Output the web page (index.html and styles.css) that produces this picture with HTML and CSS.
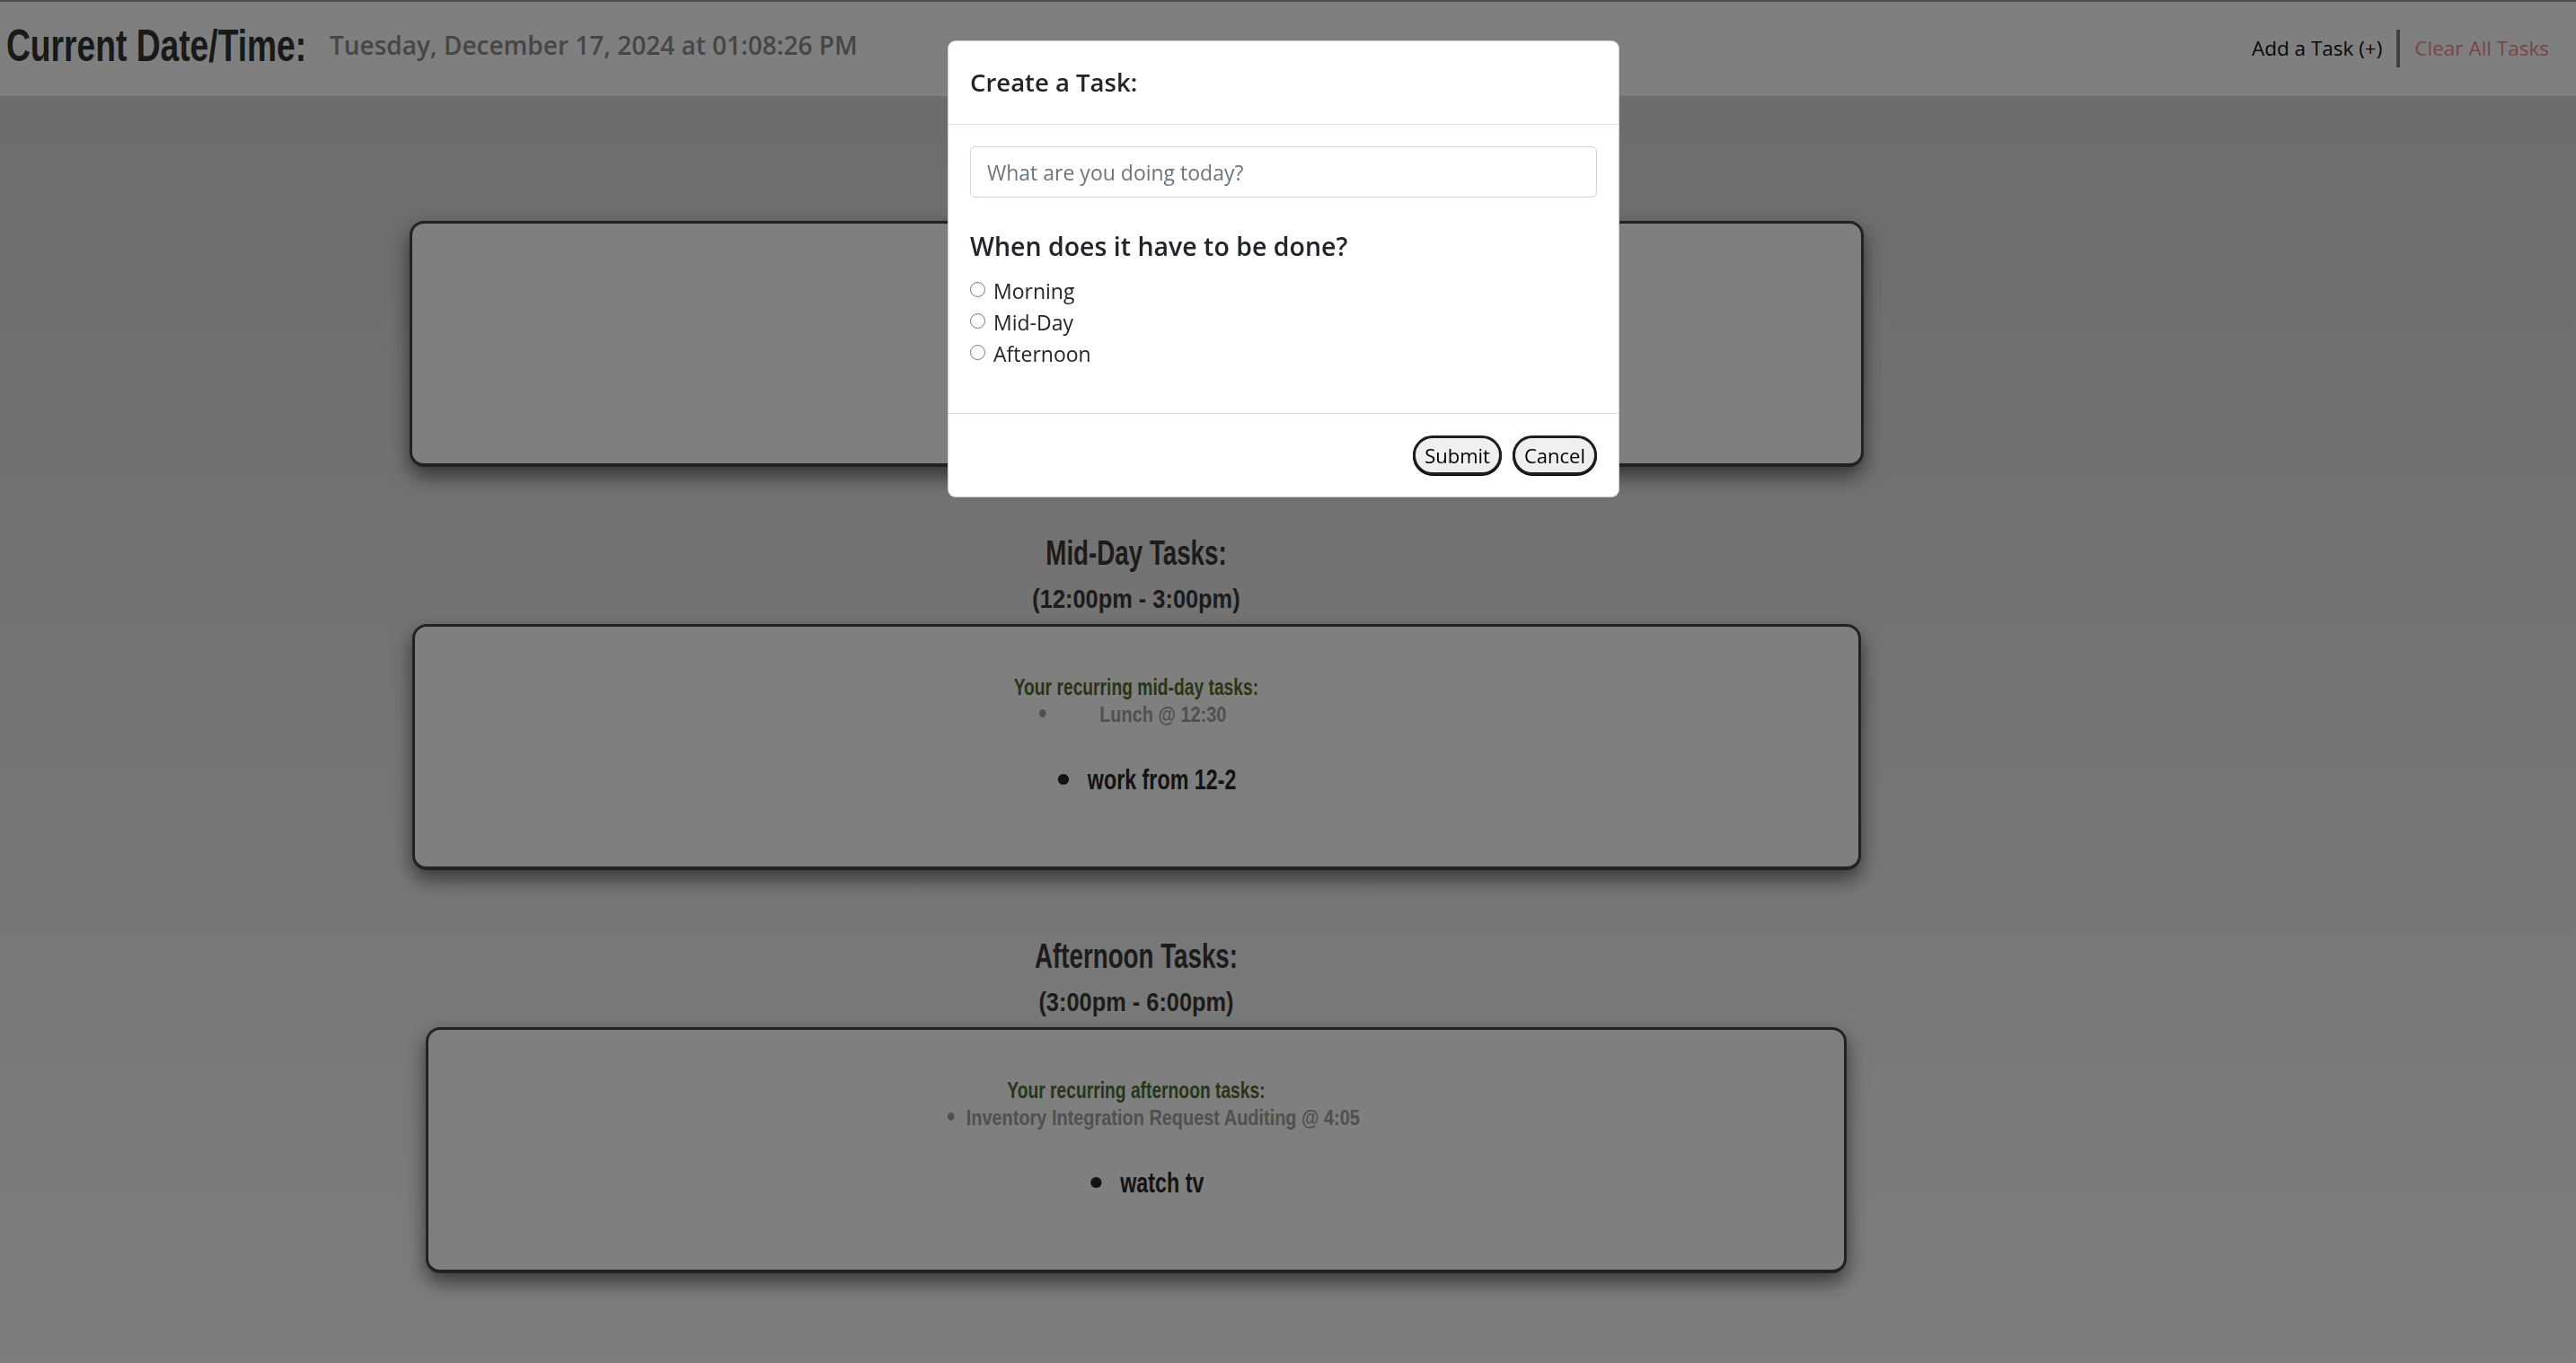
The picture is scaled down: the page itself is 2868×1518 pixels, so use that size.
FILE: index.html
```html
<!DOCTYPE html>
<html lang="en">
<head>
<meta charset="utf-8">
<title>Daily Planner</title>
<link rel="stylesheet" href="styles.css">
</head>
<body>
<header class="topbar">
  <div class="clock">
    <h1 class="clock-label">Current Date/Time:</h1>
    <span class="clock-value">Tuesday, December 17, 2024 at 01:08:26 PM</span>
  </div>
  <nav class="actions">
    <a class="action action-add">Add a Task (+)</a>
    <span class="action-divider"></span>
    <a class="action action-clear">Clear All Tasks</a>
  </nav>
</header>

<main class="planner">
  <section class="period">
    <h2 class="period-title">Morning Tasks:</h2>
    <h3 class="period-hours">(9:00am - 12:00pm)</h3>
    <div class="card card-morning"></div>
  </section>

  <section class="period">
    <h2 class="period-title">Mid-Day Tasks:</h2>
    <h3 class="period-hours">(12:00pm - 3:00pm)</h3>
    <div class="card card-midday">
      <div class="recurring">
        <p class="recurring-title">Your recurring mid-day tasks:</p>
        <ul class="recurring-list"><li>Lunch @ 12:30</li></ul>
      </div>
      <ul class="task-list"><li>work from 12-2</li></ul>
    </div>
  </section>

  <section class="period">
    <h2 class="period-title">Afternoon Tasks:</h2>
    <h3 class="period-hours">(3:00pm - 6:00pm)</h3>
    <div class="card card-afternoon">
      <div class="recurring">
        <p class="recurring-title">Your recurring afternoon tasks:</p>
        <ul class="recurring-list"><li>Inventory Integration Request Auditing @ 4:05</li></ul>
      </div>
      <ul class="task-list"><li>watch tv</li></ul>
    </div>
  </section>
</main>

<div class="backdrop"></div>

<div class="modal-wrap">
  <div class="modal">
    <div class="modal-header">
      <h5 class="modal-title">Create a Task:</h5>
    </div>
    <div class="modal-body">
      <input class="task-input" type="text" placeholder="What are you doing today?">
      <h4 class="when-title">When does it have to be done?</h4>
      <div class="choices">
        <label class="choice"><input class="choice-radio" type="radio" name="when"><span>Morning</span></label>
        <label class="choice"><input class="choice-radio" type="radio" name="when"><span>Mid-Day</span></label>
        <label class="choice"><input class="choice-radio" type="radio" name="when"><span>Afternoon</span></label>
      </div>
    </div>
    <div class="modal-footer">
      <button class="btn" type="button">Submit</button>
      <button class="btn" type="button">Cancel</button>
    </div>
  </div>
</div>
</body>
</html>
```

FILE: styles.css
```css
* {
  box-sizing: border-box;
}

html,
body {
  margin: 0;
  padding: 0;
}

body {
  min-height: 1518px;
  background: linear-gradient(to bottom, #dcd8da 0px, #dcd8da 110px, #fcfcfc 1518px);
  font-family: "Open Sans", "Noto Sans", sans-serif;
  color: #212529;
}

/* Condensed display face (Oswald-like) built from Liberation Sans Bold */
.clock-label,
.period-title,
.period-hours,
.card {
  font-family: "Liberation Sans", Arial, sans-serif;
  font-weight: 700;
}

/* ---------- top bar ---------- */
.topbar {
  height: 107px;
  border-top: 2px solid #9a9aa2;
  background: #ffffff;
  display: flex;
  align-items: flex-start;
  justify-content: space-between;
  padding: 0 30px 0 7px;
}

.clock {
  display: flex;
  align-items: flex-start;
  gap: 25px;
}

.clock-label {
  width: 335px;
  margin: 21px 0 0;
  font-size: 50px;
  line-height: 56px;
  white-space: nowrap;
  color: #333333;
  transform: scaleX(0.744);
  transform-origin: left center;
}

.clock-value {
  margin-top: 28px;
  font-size: 28px;
  line-height: 40px;
  font-weight: 600;
  color: #8c8c8c;
}

.actions {
  display: flex;
  align-items: center;
  height: 42px;
  margin-top: 31px;
}

.action {
  font-size: 22.5px;
  line-height: 32px;
  cursor: pointer;
}

.action-add {
  color: #111111;
}

.action-clear {
  color: #f08c8c;
}

.action-divider {
  width: 4px;
  height: 42px;
  margin: 0 16px;
  background: #808080;
}

/* ---------- planner ---------- */
.planner {
  width: 2530px;
  padding-top: 36px;
  text-align: center;
}

.period + .period {
  margin-top: 72px;
}

.period-title,
.period-hours {
  margin: 0;
  color: #383838;
  white-space: nowrap;
}

.period-title {
  font-size: 38px;
  line-height: 48px;
  transform: scaleX(0.73);
}

.period-hours {
  font-size: 29px;
  line-height: 54px;
  transform: scaleX(0.875);
}

.card {
  height: 274px;
  margin: 1px auto 0;
  padding-top: 53px;
  background: #ffffff;
  border: 3px solid #444444;
  border-bottom-width: 4px;
  border-radius: 16px;
  box-shadow: 0 10px 22px rgba(0, 0, 0, 0.55);
}

.card-morning {
  width: 1619px;
}

.card-midday {
  width: 1613px;
}

.card-afternoon {
  width: 1582px;
}

.recurring {
  width: fit-content;
  margin: 0 auto;
}

.recurring-title {
  margin: 0;
  font-size: 25px;
  line-height: 29px;
  white-space: nowrap;
  color: #556b2f;
  transform: scaleX(0.77);
}

.recurring-list {
  margin: 0;
  padding-left: 72px;
  font-size: 24px;
  line-height: 28px;
  white-space: nowrap;
  color: #a0a0a0;
  transform: scaleX(0.83);
}

.recurring-list li::marker {
  font-size: 30px;
}

.task-list {
  width: fit-content;
  margin: 38px auto 0;
  padding: 0;
  list-style: none;
  font-size: 32px;
  line-height: 40px;
  white-space: nowrap;
  color: #262626;
  transform: scaleX(0.727);
}

.task-list li::before {
  content: "";
  display: inline-block;
  width: 16.5px;
  height: 12px;
  margin: 0 29px 0 33px;
  border-radius: 50%;
  background: #262626;
  vertical-align: 5px;
}

/* ---------- modal ---------- */
.backdrop {
  position: fixed;
  inset: 0;
  background: rgba(0, 0, 0, 0.5);
}

.modal-wrap {
  position: fixed;
  inset: 0;
  display: flex;
  justify-content: center;
  align-items: flex-start;
  padding: 45px 10px 0 0;
}

.modal {
  width: 748px;
  background: #ffffff;
  border: 1px solid rgba(0, 0, 0, 0.2);
  border-radius: 9px;
}

.modal-header {
  padding: 23px 24px 24px;
  border-bottom: 1px solid #dee2e6;
}

.modal-title {
  margin: 0;
  font-size: 27.5px;
  line-height: 45px;
  font-weight: 600;
  color: #212529;
}

.modal-body {
  padding: 24px;
}

.task-input {
  display: block;
  width: 100%;
  height: 57px;
  padding: 9px 18px;
  font-family: inherit;
  font-size: 23px;
  color: #495057;
  background: #ffffff;
  border: 1px solid #ced4da;
  border-radius: 6px;
}

.task-input::placeholder {
  color: #6c757d;
}

.when-title {
  margin: 36px 0 14px;
  font-size: 28.5px;
  line-height: 36px;
  font-weight: 600;
  color: #212529;
}

.choices {
  display: flex;
  flex-direction: column;
  padding-bottom: 25px;
}

.choice {
  display: flex;
  align-items: center;
  height: 35px;
  font-size: 23px;
  color: #212529;
}

.choice-radio {
  appearance: none;
  -webkit-appearance: none;
  width: 17px;
  height: 17px;
  margin: 0 9px 2px 0;
  border: 1px solid #767676;
  border-radius: 50%;
  background: #ffffff;
}

.modal-footer {
  display: flex;
  justify-content: flex-end;
  align-items: center;
  padding: 18px;
  border-top: 1px solid #dee2e6;
}

.btn {
  height: 44px;
  margin: 6px;
  padding: 0 10px;
  font-family: inherit;
  font-size: 22px;
  line-height: 38px;
  color: #000000;
  background: #efefef;
  border: 3px solid #1e1e1e;
  border-radius: 22px;
  box-shadow: 0 1px 0 #000000;
}
```
